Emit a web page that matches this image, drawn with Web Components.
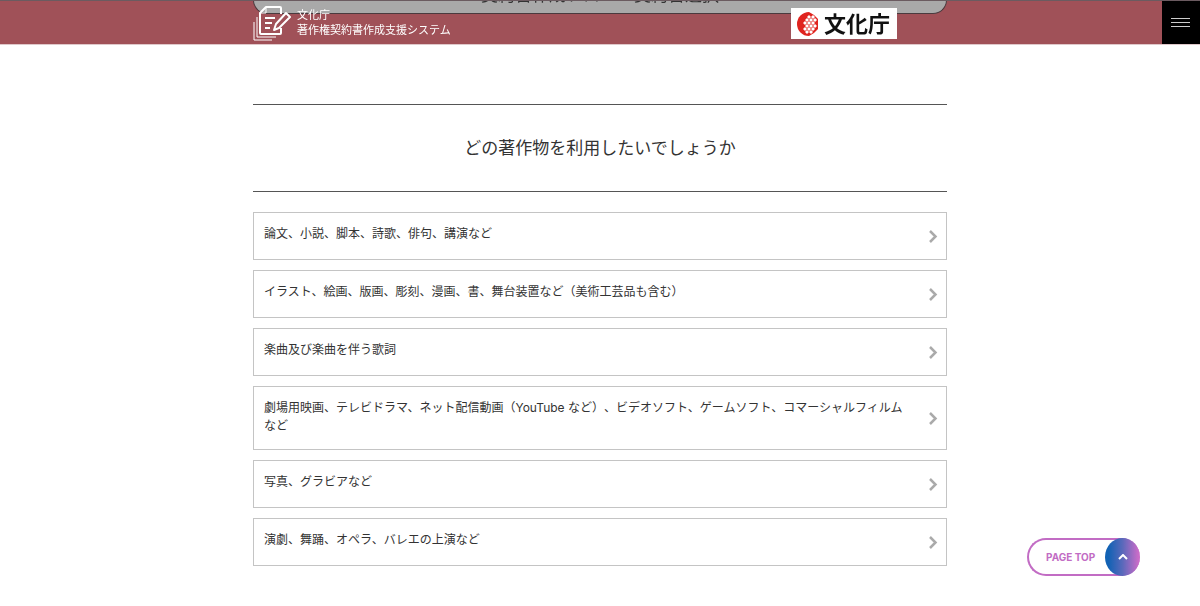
<!DOCTYPE html>
<html lang="ja">
<head>
<meta charset="utf-8">
<meta name="viewport" content="width=device-width, initial-scale=1">
<title>著作権契約書作成支援システム</title>
<style>
html { overflow-x: hidden; }
body {
  margin: 0;
  background: #fff;
  color: #333;
  font-family: Inter, "Noto Sans CJK JP", sans-serif;
  font-size: 12px;
  line-height: 18px;
  text-spacing-trim: space-all;
  --column: 694px;
}
</style>
</head>
<body>
<site-header></site-header>
<main>
  <question-section>
    <span slot="title">どの著作物を利用したいでしょうか</span>
    <choice-link>論文、小説、脚本、詩歌、俳句、講演など</choice-link>
    <choice-link>イラスト、絵画、版画、彫刻、漫画、書、舞台装置など（美術工芸品も含む）</choice-link>
    <choice-link>楽曲及び楽曲を伴う歌詞</choice-link>
    <choice-link>劇場用映画、テレビドラマ、ネット配信動画（YouTube など）、ビデオソフト、ゲームソフト、コマーシャルフィルムなど</choice-link>
    <choice-link>写真、グラビアなど</choice-link>
    <choice-link>演劇、舞踊、オペラ、バレエの上演など</choice-link>
  </question-section>
</main>
<page-top>PAGE TOP</page-top>

<script>
function define(name, html) {
  const template = document.createElement('template');
  template.innerHTML = html;
  customElements.define(name, class extends HTMLElement {
    constructor() {
      super();
      this.attachShadow({ mode: 'open' }).append(template.content.cloneNode(true));
    }
  });
}

define('system-logo', `
<style>
:host { display: block; }
a { display: flex; gap: 6px; color: #fff; text-decoration: none; font-size: 11px; line-height: 15px; }
svg { display: block; width: 38px; height: 36px; }
.name { padding-top: 3px; white-space: nowrap; }
.name span { display: block; }
</style>
<a href="#">
  <svg viewBox="0 0 38 36" fill="none" stroke="#fff" stroke-width="2" stroke-linejoin="round" aria-hidden="true">
    <path d="M28 9V3Q28 2 27 2H13L7 8V28Q7 29 8 29H27Q28 29 28 28V23"/>
    <path d="M13 2V8H7" stroke-width="1"/>
    <path d="M12 13H22M12 18H19M12 23H17"/>
    <path d="M33 8L37 12L26 23L21 25L23 19Z"/>
    <path d="M4 12V32H23M1 17V35H19" stroke-width="1"/>
  </svg>
  <span class="name"><span>文化庁</span><span>著作権契約書作成支援システム</span></span>
</a>`);

define('agency-logo', `
<style>
:host { display: block; }
a {
  display: flex; align-items: center; gap: 6px; box-sizing: border-box;
  width: 106px; height: 31px; padding: 0 5px; background: #fff;
  color: #111; text-decoration: none; font-size: 22px; line-height: 30px; font-weight: 700;
}
svg { flex: none; width: 22px; height: 24px; }
</style>
<a href="#">
  <svg viewBox="0 0 22 24" aria-hidden="true">
    <path d="M13 0A12 12 0 1 0 13 24L18 21L22 17V7L18 3Z" fill="#e0241f"/>
    <g fill="#fff">
      <path d="M13 3l2 2-2 2-2-2zM17 3l2 2-2 2-2-2zM11 6l2 2-2 2-2-2zM15 6l2 2-2 2-2-2zM19 6l2 2-2 2-2-2zM9 9l2 2-2 2-2-2zM13 9l2 2-2 2-2-2zM17 9l2 2-2 2-2-2zM11 12l2 2-2 2-2-2zM15 12l2 2-2 2-2-2zM19 12l2 2-2 2-2-2zM9 15l2 2-2 2-2-2zM13 15l2 2-2 2-2-2zM17 15l2 2-2 2-2-2zM15 18l2 2-2 2-2-2zM11 18l2 2-2 2-2-2z"/>
    </g>
  </svg>
  <span>文化庁</span>
</a>`);

define('site-header', `
<style>
:host { display: block; height: 44px; }
header {
  position: fixed; top: 0; left: 0; right: 0; z-index: 2; height: 44px;
  display: grid; grid-template-columns: 1fr minmax(0, var(--column)) 1fr;
  background: #a05158; box-shadow: 0 1px 0 #dfc8ca;
}
.bar { grid-column: 2; position: relative; display: flex; justify-content: space-between; align-items: flex-start; }
.sheet {
  position: absolute; inset: 0 0 auto; box-sizing: border-box; height: 14px; overflow: hidden;
  border: 1px solid #4a3a3e; border-top: 0; border-radius: 0 0 18px 18px; background: #a9a9a9;
  color: #333; text-align: center; font-size: 17px; line-height: 20px;
}
.sheet span { display: block; margin-top: -15px; }
system-logo, agency-logo { position: relative; }
system-logo { padding-top: 5px; }
agency-logo { padding-top: 8px; margin-right: 50px; }
header::before { content: ""; position: absolute; inset: 0 0 auto; z-index: 1; height: 1px; background: #6b5b60; }
button {
  justify-self: end; display: grid; place-items: center; width: 38px; height: 44px;
  margin: 0; padding: 0; border: 0; background: #000; color: #ccc;
}
</style>
<header>
  <div class="bar">
    <div class="sheet"><span>契約書作成フロー：契約書選択</span></div>
    <system-logo></system-logo>
    <agency-logo></agency-logo>
  </div>
  <button type="button" aria-label="メニュー">
    <svg width="20" height="11" viewBox="0 0 20 11" stroke="currentColor" aria-hidden="true"><path d="M0 1.5H19M0 5.5H19M0 9.5H19"/></svg>
  </button>
</header>`);

define('question-section', `
<style>
:host { display: block; box-sizing: border-box; max-width: var(--column); margin: 60px auto 38px; }
h1 {
  margin: 0 0 20px; padding: 30px 0; border: solid #555; border-width: 1px 0;
  font-size: 17px; line-height: 26px; font-weight: 400; text-align: center;
}
nav { display: grid; gap: 10px; }
</style>
<h1><slot name="title"></slot></h1>
<nav><slot></slot></nav>`);

define('choice-link', `
<style>
:host { display: block; }
a {
  display: grid; grid-template-columns: minmax(0, 1fr) 10px; gap: 20px;
  box-sizing: border-box; min-height: 48px; padding: 0 8px 0 10px;
  border: 1px solid #c4c4c4; color: #333; text-decoration: none;
}
span { padding: 12px 0 14px; }
svg { align-self: center; width: 10px; height: 13px; }
</style>
<a href="#">
  <span><slot></slot></span>
  <svg viewBox="0 0 10 13" fill="none" stroke="#aaa" stroke-width="2.5" aria-hidden="true"><path d="M2 1L7.5 6.5L2 12"/></svg>
</a>`);

define('page-top', `
<style>
:host { position: fixed; right: 60px; bottom: 30px; z-index: 1; display: block; }
a {
  display: flex; align-items: center; justify-content: space-between; box-sizing: border-box;
  width: 113px; height: 38px; padding-left: 17px; border: 2px solid #c26cc4; border-right: 0;
  border-radius: 19px; background: #fff; color: #c26cc4;
  text-decoration: none; font-size: 10px; font-weight: 700; white-space: nowrap;
}
i {
  display: grid; place-items: center; flex: none; width: 35px; height: 38px; border-radius: 50%;
  background: linear-gradient(90deg, #1262b4 10%, #5a69bb 50%, #c96cc8 95%);
}
</style>
<a href="#">
  <span><slot></slot></span>
  <i><svg width="10" height="6" viewBox="0 0 10 6" fill="none" stroke="#fff" stroke-width="2" aria-hidden="true"><path d="M1 5L5 1L9 5"/></svg></i>
</a>`);
</script>
</body>
</html>
